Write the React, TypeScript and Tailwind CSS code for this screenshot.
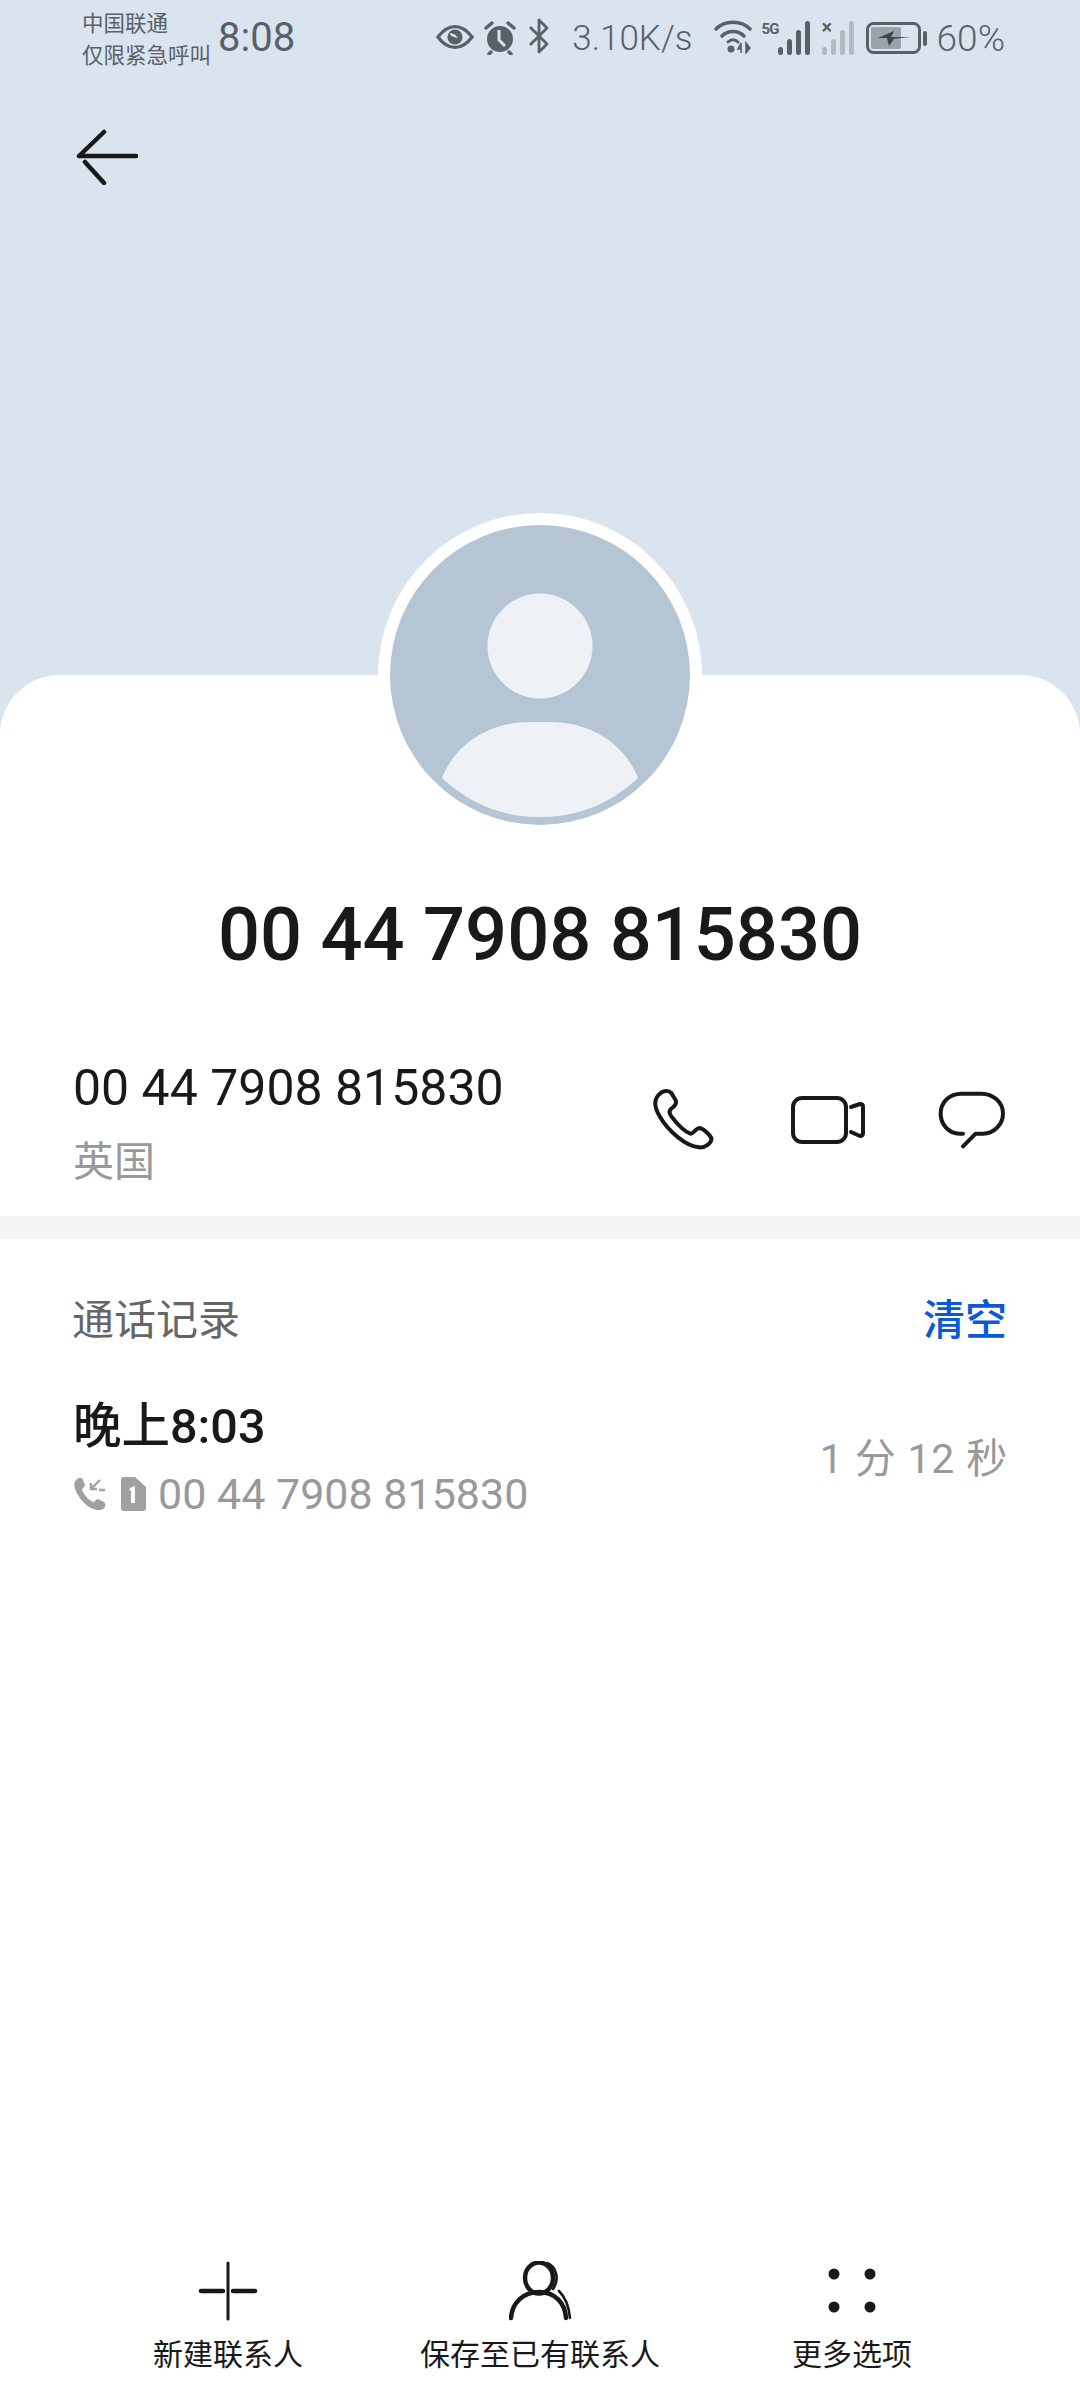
const StatusIcons = () => (
  <div className="flex items-center">
    {/* eye */}
    <svg width="38" height="26" viewBox="0 0 40 26" className="mt-[-2px]">
      <path d="M2 13C8 5 14 2 20 2s12 3 18 11c-6 8-12 11-18 11S8 21 2 13Z" fill="none" stroke="#5a6068" strokeWidth="3.5" />
      <circle cx="20" cy="13" r="8" fill="#5a6068" />
      <path d="M14 9c3 0 7 1 9 5-3-1-7-1-9-5Z" fill="#d9e4ee" />
    </svg>
    {/* alarm */}
    <svg width="34" height="34" viewBox="0 0 32 34" className="ml-[9px]">
      <circle cx="16" cy="18" r="13" fill="#5a6068" />
      <path d="M2 7l6-5M30 7l-6-5M7 31l-2 2M25 31l2 2" stroke="#5a6068" strokeWidth="3.5" strokeLinecap="round" />
      <path d="M15 9v10l6 6" stroke="#d9e4ee" strokeWidth="3" fill="none" />
    </svg>
    {/* bluetooth */}
    <svg width="22" height="36" viewBox="0 0 22 36" className="ml-[11px] mt-[-4px]">
      <path d="M2 9l17 17-8 8V2l8 8L2 27" fill="none" stroke="#5a6068" strokeWidth="2.8" strokeLinejoin="round" />
    </svg>
    <span className="ml-[22px] text-[35px] leading-none font-light text-[#5a6068]">3.10K/s</span>
    {/* wifi with up/down arrows */}
    <svg width="38" height="36" viewBox="0 0 38 36" className="ml-[21px] mt-[-4px]">
      <path d="M2 11C11 2 27 2 36 11" fill="none" stroke="#5a6068" strokeWidth="3.5" strokeLinecap="round" />
      <path d="M8 18c6-6 16-6 22 0" fill="none" stroke="#5a6068" strokeWidth="3.5" strokeLinecap="round" />
      <path d="M14 24c3-3 7-3 10 0" fill="none" stroke="#5a6068" strokeWidth="3" strokeLinecap="round" />
      <circle cx="17" cy="31" r="3.5" fill="#5a6068" />
      <path d="M27 35V25l-3 6h3M32 25v10l4-5Z" fill="#5a6068" stroke="#5a6068" strokeWidth="1.5" />
    </svg>
    <span className="ml-[10px] mt-[-18px] w-[16px] text-[15px] leading-none font-bold tracking-[-0.06em] text-[#5a6068]">5G</span>
    <Signal color="#5a6068" />
    <div className="relative ml-[11px]">
      <Signal color="#b3bac2" />
      <span className="absolute left-0 top-[-4px] text-[20px] leading-none font-bold text-[#5a6068]">×</span>
    </div>
    {/* battery, charging */}
    <svg width="62" height="32" viewBox="0 0 62 32" className="ml-[11px]">
      <rect x="1.5" y="1.5" width="52" height="29" rx="6" fill="none" stroke="#5a6068" strokeWidth="3" />
      <rect x="5" y="5" width="30" height="22" rx="2" fill="#9aa2ab" />
      <path d="M12 16l16-7-3 6h20l-20 2 3 0-5 7-2-8Z" fill="#3f454c" />
      <rect x="57" y="9" width="4" height="15" rx="2" fill="#5a6068" />
    </svg>
    <span className="ml-[9px] text-[37px] leading-none font-light text-[#5a6068]">60%</span>
  </div>
);

const Signal = ({ color }: { color: string }) => (
  <svg width="33" height="34" viewBox="0 0 33 34" fill={color}>
    <rect x="0" y="26" width="5" height="8" rx="2.5" />
    <rect x="9" y="18" width="5" height="16" rx="2.5" />
    <rect x="18" y="9" width="5" height="25" rx="2.5" />
    <rect x="27" y="0" width="5" height="34" rx="2.5" />
  </svg>
);

const PhoneIcon = () => (
  <svg width="62" height="63" viewBox="100 85 186 189" fill="none" stroke="#191919" strokeWidth="12" strokeLinejoin="round">
    <path d="M112 112C125 92 145 90 155 100L168 122C172 132 165 140 155 147C148 152 148 160 155 170C170 190 195 215 212 222C220 224 228 205 240 205C252 207 270 225 275 235C278 250 255 265 238 263C200 260 145 215 120 170C105 145 102 128 112 112Z" />
  </svg>
);

const VideoIcon = () => (
  <svg width="74" height="48" viewBox="0 0 74 48" fill="none" stroke="#191919" strokeWidth="4" strokeLinejoin="round">
    <rect x="2" y="2" width="53" height="44" rx="9" />
    <path d="M60 11l9-3c2 0 3 1 3 3v26c0 2-1 3-3 3l-9-4" strokeLinecap="round" />
  </svg>
);

const MessageIcon = () => (
  <svg width="68" height="58" viewBox="955 97 204 174" fill="none" stroke="#191919" strokeWidth="12" strokeLinecap="round" strokeLinejoin="round">
    <path d="M1030 225L1020 225C985 225 963 195 963 165C963 130 990 105 1025 105L1085 105C1120 105 1150 130 1150 165C1150 195 1125 225 1090 225L1068 225L1030 263" />
  </svg>
);

const PlusIcon = () => (
  <svg width="60" height="60" viewBox="0 0 60 60" stroke="#191919" strokeLinecap="round">
    <path d="M30 2v56" strokeWidth="3" />
    <path d="M3 30h22M35 30h22" strokeWidth="4.5" />
  </svg>
);

const PersonIcon = () => (
  <svg width="64" height="60" viewBox="0 0 64 60" fill="none" stroke="#191919" strokeLinecap="round" className="ml-[2px]">
    <ellipse cx="30" cy="17" rx="14" ry="15.5" strokeWidth="4.5" />
    <path d="M2 57C3 42 14 31 30 31s26 11 27 26" strokeWidth="4.5" />
    <path d="M38 2c9 3 13 16 6 26M50 30c7 7 10 16 11 27" strokeWidth="2.6" />
  </svg>
);

const DotsIcon = () => (
  <svg width="48" height="48" viewBox="0 0 48 48" fill="#191919">
    <circle cx="6" cy="7" r="5.5" />
    <circle cx="42" cy="7" r="5.5" />
    <circle cx="6" cy="40" r="5.5" />
    <circle cx="42" cy="40" r="5.5" />
  </svg>
);

const ToolbarItem = ({ icon, label }: { icon: React.ReactNode; label: string }) => (
  <div className="flex flex-col items-center">
    <div className="flex h-[62px] items-center justify-center">{icon}</div>
    <span className="mt-[13px] text-[30px] leading-[40px] whitespace-nowrap text-[#191919]">{label}</span>
  </div>
);

export default function App() {
  return (
    <div className="flex h-[2400px] w-[1080px] flex-col overflow-hidden bg-[#d9e4ee] font-['Roboto','Noto_Sans_CJK_SC',sans-serif]">
      <div className="h-[675px] shrink-0">
        <div className="flex h-[76px] items-center pr-[75px] pl-[82px]">
          <div className="w-[136px] pt-[3px] text-[21.5px] leading-[32px] whitespace-nowrap text-[#5a6068]">
            <div>中国联通</div>
            <div>仅限紧急呼叫</div>
          </div>
          <span className="text-[40px] leading-none text-[#5a6068]">8:08</span>
          <div className="ml-auto">
            <StatusIcons />
          </div>
        </div>
        <button className="mt-[53px] ml-[76px] block">
          <svg width="62" height="56" viewBox="0 0 62 56" fill="none" stroke="#191919" strokeWidth="4.5" strokeLinecap="round">
            <path d="M3 27h57M3 27L28 3M9 33l19 21" />
          </svg>
        </button>
      </div>

      <div className="relative flex flex-1 flex-col rounded-t-[60px] bg-white">
        {/* avatar sits on the edge of the sheet */}
        <div className="absolute top-[-162px] left-[378px] flex h-[324px] w-[324px] items-center justify-center rounded-full bg-white">
          <div className="h-[300px] w-[300px] overflow-hidden rounded-full bg-[#b6c5d4]">
            <svg width="300" height="300" viewBox="0 0 300 300" fill="#eef2f6">
              <circle cx="150" cy="121" r="52.5" />
              <path d="M52 253C66 218 100 197 140 197h20c40 0 74 21 88 56-28 26-60 39-98 39s-70-13-98-39Z" />
            </svg>
          </div>
        </div>

        <h1 className="mt-[208px] text-center text-[74px] leading-[104px] font-medium text-[#191919]">
          00 44 7908 815830
        </h1>

        <div className="mt-[71px] flex h-[158px] items-start pr-[74px] pl-[73px]">
          <div className="flex flex-col">
            <span className="text-[50px] leading-[60px] text-[#191919]">00 44 7908 815830</span>
            <span className="mt-[16px] text-[41px] leading-[56px] text-[#999999]">英国</span>
          </div>
          <div className="ml-auto flex items-center pt-[30px]">
            <PhoneIcon />
            <div className="ml-[76px]">
              <VideoIcon />
            </div>
            <div className="ml-[73px]">
              <MessageIcon />
            </div>
          </div>
        </div>

        <div className="h-[23px] bg-[#f5f5f5]" />

        <div className="mt-[52px] flex items-center justify-between pr-[73px] pl-[72px] text-[42px] leading-[60px]">
          <span className="text-[#666666]">通话记录</span>
          <span className="font-medium text-[#0a59d6]">清空</span>
        </div>

        <div className="mt-[45px] flex items-center justify-between pr-[72px] pl-[73px]">
          <div className="flex flex-col">
            <span className="text-[48.5px] leading-[62px] font-medium text-[#191919]">晚上8:03</span>
            <div className="mt-[9px] flex items-center text-[#999999]">
              <svg width="34" height="34" viewBox="0 0 34 34" fill="#a0a0a0">
                <path d="M3 3C6 0 9 0 10 3l2 5c0 2-3 3-3 5 2 5 7 10 11 12 2 0 3-3 5-3l6 3c2 2 2 5-1 7-3 2-8 1-12-1C12 28 5 20 2 12 1 8 1 5 3 3Z" />
                <path d="M27 3l-9 9M18 6v6h6M26 13l6 0" fill="none" stroke="#a0a0a0" strokeWidth="2.4" />
              </svg>
              <svg width="25" height="34" viewBox="0 0 25 34" className="ml-[14px]">
                <path d="M3 0h11l11 10v21c0 2-1 3-3 3H3c-2 0-3-1-3-3V3c0-2 1-3 3-3Z" fill="#a0a0a0" />
                <path d="M9 11l5-2v17h-4V13l-2 1Z" fill="#ffffff" />
              </svg>
              <span className="ml-[12px] text-[43px] leading-[54px]">00 44 7908 815830</span>
            </div>
          </div>
          <span className="text-[41px] leading-[56px] tracking-[0.02em] text-[#999999]">1 分 12 秒</span>
        </div>

        <div className="mt-auto mb-[25px] grid grid-cols-3 px-[72px]">
          <ToolbarItem icon={<PlusIcon />} label="新建联系人" />
          <ToolbarItem icon={<PersonIcon />} label="保存至已有联系人" />
          <ToolbarItem icon={<DotsIcon />} label="更多选项" />
        </div>
      </div>
    </div>
  );
}
